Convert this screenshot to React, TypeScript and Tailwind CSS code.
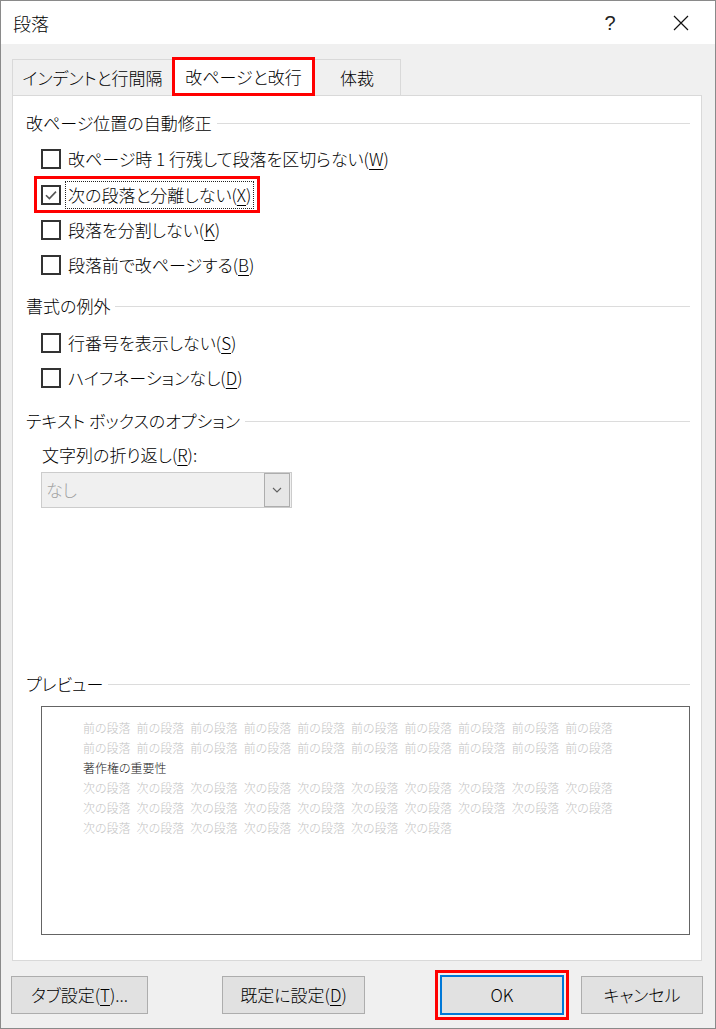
import React from 'react';

const ui = "font-['Noto_Sans_CJK_JP','Noto_Sans',sans-serif] [font-feature-settings:'palt'] font-light";

function U({ k }: { k: string }) {
  return <span className="underline underline-offset-[3px] decoration-1">{k}</span>;
}

function Box({ checked }: { checked?: boolean }) {
  return (
    <span className="w-[20px] h-[20px] border-2 border-[#333333] bg-white flex items-center justify-center shrink-0">
      {checked && (
        <svg width="14" height="14" viewBox="0 0 14 14">
          <path d="M2 7.2 L5.4 10.6 L12 3.6" fill="none" stroke="#555555" strokeWidth="1.6" />
        </svg>
      )}
    </span>
  );
}

function Group({ title, className }: { title: string; className?: string }) {
  return (
    <div className={`flex items-center h-[24px] pl-[13px] pr-[11px] ${className ?? ''}`}>
      <span className="whitespace-nowrap">{title}</span>
      <span className="flex-1 h-px bg-[#dcdcdc] ml-[5px]" />
    </div>
  );
}

function Row({ children, h = 'h-[35px]', className }: { children: React.ReactNode; h?: string; className?: string }) {
  return (
    <div className={`flex items-center pl-[28px] gap-[7px] ${h} ${className ?? ''}`}>
      <Box />
      <span className="whitespace-nowrap">{children}</span>
    </div>
  );
}

function Btn({ children, w }: { children: React.ReactNode; w: string }) {
  return (
    <div className={`${w} h-[38px] bg-[#e1e1e1] border border-[#adadad] flex items-center justify-center`}>
      {children}
    </div>
  );
}

function Line({ word, n, dark }: { word: string; n: number; dark?: boolean }) {
  return (
    <div className={`flex gap-[6px] h-[20px] items-center ${dark ? 'text-[#222222]' : 'text-[#c4c4c4]'}`}>
      {Array.from({ length: n }).map((_, i) => (
        <span key={i} className="whitespace-nowrap">{word}</span>
      ))}
    </div>
  );
}

export default function App() {
  return (
    <div className={`w-[716px] h-[1029px] bg-[#f0f0f0] border border-[#8a8a8a] flex flex-col text-[17px] text-black leading-[24px] overflow-hidden ${ui}`}>
      {/* title bar */}
      <div className="h-[43px] bg-white flex items-center pl-[12px] shrink-0">
        <span className="text-[18px]">段落</span>
        <div className="ml-auto flex items-center mr-[11px]">
          <div className="w-[46px] flex justify-center text-[20px] text-[#222222] font-['Liberation_Sans',sans-serif]">?</div>
          <div className="w-[46px] ml-[25px] flex justify-center">
            <svg width="16" height="16" viewBox="0 0 16 16">
              <path d="M1 1 L15 15 M15 1 L1 15" stroke="#111111" strokeWidth="1.2" />
            </svg>
          </div>
        </div>
      </div>

      {/* tabs */}
      <div className="mt-[13px] ml-[11px] h-[38px] flex items-end shrink-0">
        <div className="w-[160px] h-[36px] border-t border-l border-[#d9d9d9] flex items-center justify-center">
          インデントと行間隔
        </div>
        <div className="relative z-10 w-[143px] h-[39px] -mb-[1px] bg-white border-[3px] border-[#ff0000] flex items-center justify-center">
          改ページと改行
        </div>
        <div className="-ml-[1px] w-[87px] h-[36px] border-t border-r border-[#d9d9d9] flex items-center justify-center">
          体裁
        </div>
      </div>

      {/* panel */}
      <div className="ml-[11px] w-[690px] h-[866px] bg-white border border-[#d9d9d9] flex flex-col shrink-0">
        <Group title="改ページ位置の自動修正" className="mt-[15px]" />
        <Row h="h-[34px]" className="mt-[7px]">
          改ページ時 1 行残して段落を区切らない(<U k="W" />)
        </Row>
        <div className="ml-[21px] w-[226px] h-[37px] border-[3px] border-[#ff0000] flex items-center pl-[4px]">
          <Box checked />
          <div className="ml-[4px] h-[28px] border border-dotted border-[#222222] flex items-center px-[2px] whitespace-nowrap">
            次の段落と分離しない(<U k="X" />)
          </div>
        </div>
        <Row h="h-[34px]">
          段落を分割しない(<U k="K" />)
        </Row>
        <Row>
          段落前で改ページする(<U k="B" />)
        </Row>

        <Group title="書式の例外" className="mt-[12px]" />
        <Row className="mt-[7px]">
          行番号を表示しない(<U k="S" />)
        </Row>
        <Row>
          ハイフネーションなし(<U k="D" />)
        </Row>

        <Group title="テキスト ボックスのオプション" className="mt-[14px]" />
        <div className="mt-[10px] pl-[29px] h-[24px] flex items-center">
          文字列の折り返し(<U k="R" />):
        </div>
        <div className="mt-[5px] ml-[28px] w-[251px] h-[36px] bg-[#f0f0f0] border border-[#cccccc] flex items-center">
          <span className="pl-[4px] text-[#a0a0a0] flex-1">なし</span>
          <div className="w-[26px] h-[34px] mr-[1px] bg-[#e6e6e6] border border-[#adadad] flex items-center justify-center">
            <svg width="10" height="6" viewBox="0 0 10 6">
              <path d="M1 1 L5 5 L9 1" fill="none" stroke="#606060" strokeWidth="1.1" />
            </svg>
          </div>
        </div>

        <Group title="プレビュー" className="mt-[164px]" />
        <div className="mt-[10px] ml-[28px] w-[649px] h-[229px] border border-[#646464] bg-white pt-[11px] pl-[41px] text-[12px] leading-[20px] font-['Noto_Sans_CJK_JP',sans-serif]">
          <Line word="前の段落" n={10} />
          <Line word="前の段落" n={10} />
          <Line word="著作権の重要性" n={1} dark />
          <Line word="次の段落" n={10} />
          <Line word="次の段落" n={10} />
          <Line word="次の段落" n={7} />
        </div>
      </div>

      {/* buttons */}
      <div className="mt-[9px] h-[50px] flex items-center shrink-0">
        <div className="ml-[10px]">
          <Btn w="w-[137px]">
            タブ設定(<U k="T" />)...
          </Btn>
        </div>
        <div className="ml-[74px]">
          <Btn w="w-[143px]">
            既定に設定(<U k="D" />)
          </Btn>
        </div>
        <div className="ml-[70px] w-[134px] h-[50px] border-[3px] border-[#ff0000] p-[2px] flex items-center">
          <div className="w-[124px] h-[40px] bg-[#e1e1e1] border-2 border-[#0078d7] flex items-center justify-center">
            OK
          </div>
        </div>
        <div className="ml-[12px]">
          <Btn w="w-[122px]">キャンセル</Btn>
        </div>
      </div>
    </div>
  );
}
